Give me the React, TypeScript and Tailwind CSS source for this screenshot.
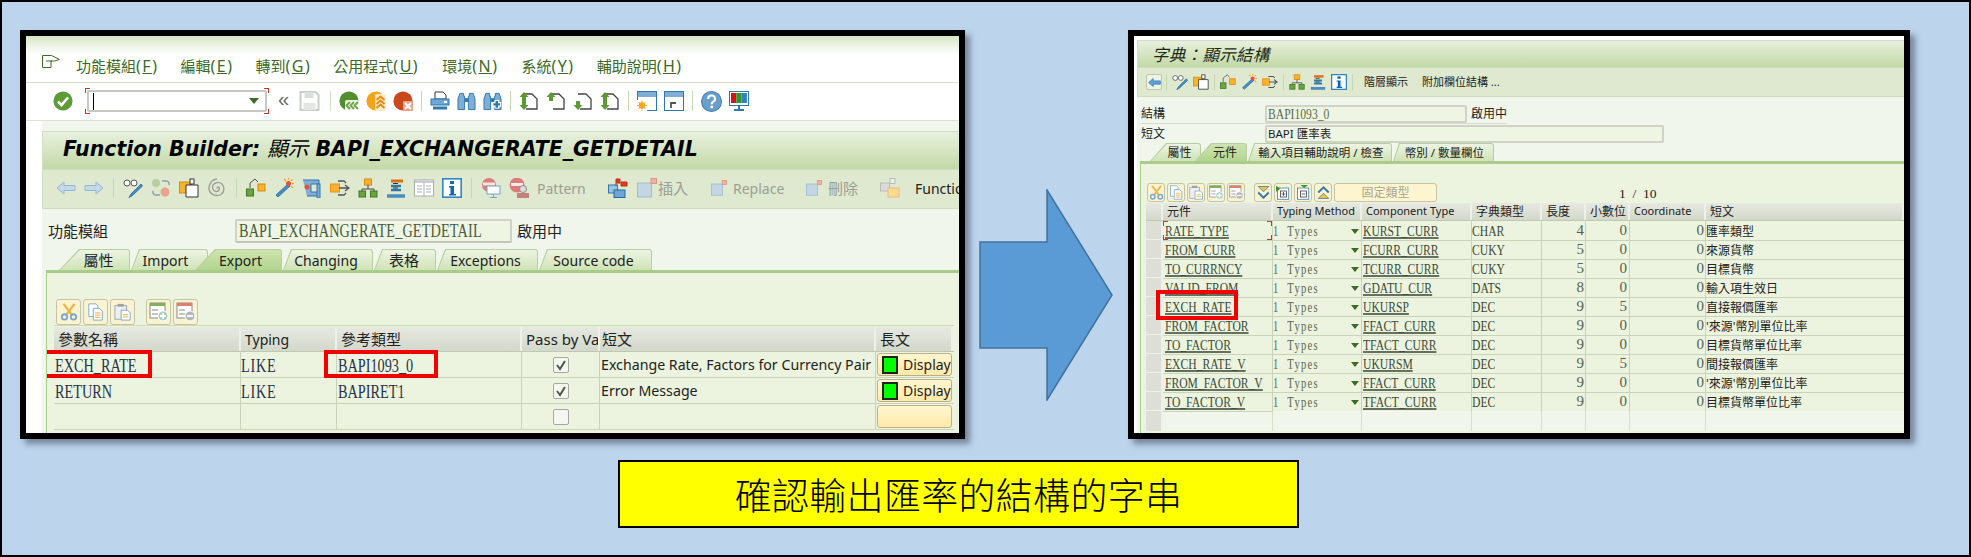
import React from "react";

type P = { className?: string };
const Svg = ({ className = "w-5 h-5", children }: P & { children: React.ReactNode }) => (
  <svg viewBox="0 0 20 20" className={`${className} shrink-0 block`}>{children}</svg>
);
const G = "#5c9a35", O = "#f5a623";

const Check = (p: P) => <Svg {...p}><circle cx="10" cy="10" r="9.6" fill="#5d9b38" /><path d="M5 10.5l3.5 3.5L15 6.5" fill="none" stroke="#fff" strokeWidth="2.6" /></Svg>;
const NavGreen = (p: P) => <Svg {...p}><circle cx="10" cy="10" r="9.6" fill="#4f8f2e" /><rect x="6" y="9" width="14" height="11" fill="#fff" opacity=".9" rx="2" /><path d="M11 11l-3.500 3.500 3.500 3.500M15 11l-3.500 3.500 3.500 3.500M19 11l-3.500 3.500 3.500 3.500" fill="none" stroke="#6aa53f" strokeWidth="1.800" /></Svg>;
const NavOrange = (p: P) => <Svg {...p}><circle cx="10" cy="10" r="9.600" fill="#f6a31c" /><rect x="9" y="3" width="11" height="17" fill="#fdebc8" rx="2" /><path d="M10.500 9l4-3.500 4 3.500M10.500 13l4-3.500 4 3.500M10.500 17l4-3.500 4 3.500" fill="none" stroke="#e98a10" strokeWidth="1.800" /></Svg>;
const NavRed = (p: P) => <Svg {...p}><circle cx="10" cy="10" r="9.600" fill="#c9481c" /><rect x="10" y="10" width="10" height="10" fill="#e9a186" rx="1" /><path d="M12 12l6 6M18 12l-6 6" stroke="#fff" strokeWidth="2.200" /></Svg>;
const Save = (p: P) => <Svg {...p}><path d="M1 1h15l3 3v15H1z" fill="#fff" stroke="#c9cdc8" strokeWidth="2" /><rect x="5" y="1" width="9" height="6" fill="#dcdedb" /><rect x="4" y="12" width="12" height="7" fill="#e4e6e2" /></Svg>;
const Print = (p: P) => <Svg {...p}><path d="M5 1h8l3 3v4H5z" fill="#fff" stroke="#333" /><rect x="1" y="8" width="18" height="6" fill="#6fa6d3" stroke="#2f78ad" /><rect x="14" y="10" width="3" height="2" fill="#fff" /><path d="M3 17h14" stroke="#2f78ad" strokeWidth="3" /></Svg>;
const Bino = ({ plus, ...p }: P & { plus?: boolean }) => <Svg {...p}><path d="M3 2h4v3h1v14H1V8z" fill="#7eaed6" stroke="#2f78ad" /><path d="M17 2h-4v3h-1v14h7V8z" fill="#7eaed6" stroke="#2f78ad" /><rect x="8" y="7" width="4" height="4" fill="#2f78ad" />{plus && <path d="M14.500 9v9M10 13.500h9" stroke="#fff" strokeWidth="5" />}{plus && <path d="M14.500 10v7M11 13.500h7" stroke="#2f78ad" strokeWidth="2.500" />}</Svg>;
const Pg = () => <path d="M5 3h8l5 5v10H7" fill="#fff" stroke="#444" strokeWidth="1.300" />;
const Up = ({ x, y }: { x: number; y: number }) => <path d={`M${x} ${y}l4.500 5h-2.500v4h-4v-4h-2.500z`} fill={G} />;
const Dn = ({ x, y }: { x: number; y: number }) => <path d={`M${x} ${y}l4.500-5h-2.500v-4h-4v4h-2.500z`} fill={G} />;
const PgFirst = (p: P) => <Svg {...p}><Pg /><Up x={5} y={1} /><Dn x={5} y={19} /></Svg>;
const PgUp = (p: P) => <Svg {...p}><Pg /><Up x={5} y={1} /></Svg>;
const PgDn = (p: P) => <Svg {...p}><Pg /><Dn x={5} y={19} /></Svg>;
const Win = ({ k, ...p }: P & { k: "star" | "arrow" }) => <Svg {...p}><rect x="0.500" y="0.500" width="19" height="19" fill="#fff" stroke="#2f78ad" /><rect x="1" y="1" width="18" height="5" fill="#7eaed6" />{k === "star" ? <g><rect x="0" y="9" width="10" height="11" fill="#fff" /><circle cx="5" cy="14.500" r="3.200" fill={O} /><path d="M5 9.500v10M0 14.500h10M1.500 11l7 7M8.500 11l-7 7" stroke={O} /></g> : <path d="M7 17v-5h5M8 12l4 0" fill="none" stroke="#555" strokeWidth="1.800" />}</Svg>;
const Help = (p: P) => <Svg {...p}><circle cx="10" cy="10" r="9.500" fill="#6b9fcb" stroke="#3f7fb5" /><path d="M6.800 7.500c0-4.200 6.600-4.200 6.600 0 0 2.700-3.200 2.500-3.200 5" fill="none" stroke="#fff" strokeWidth="2" /><rect x="9" y="14" width="2.400" height="2.400" fill="#fff" /></Svg>;
const Mon = (p: P) => <Svg {...p}><rect x="0.500" y="0.500" width="19" height="14" fill="#fff" stroke="#2f78ad" /><rect x="2" y="2" width="5.300" height="10" fill="#d6121a" /><rect x="7.300" y="2" width="5.300" height="10" fill="#2a9a2a" /><rect x="12.600" y="2" width="5.300" height="10" fill="#2f7fc9" /><path d="M10 15v3M5 19h10" stroke="#2f78ad" strokeWidth="2" /></Svg>;
const ArrowL = (p: P) => <Svg {...p}><path d="M1 10l7-6v3.500h11v5H8V16z" fill="#c3d9ea" stroke="#8fb8da" /></Svg>;
const ArrowR = (p: P) => <Svg {...p}><path d="M19 10l-7-6v3.500H1v5h11V16z" fill="#c3d9ea" stroke="#8fb8da" /></Svg>;
const Glasses = (p: P) => <Svg {...p}><circle cx="4" cy="5" r="3" fill="#fff" stroke="#555" /><circle cx="11" cy="5" r="3" fill="#fff" stroke="#555" /><path d="M18 6L8 16l-2 3.500 3.500-2L19.500 8z" fill="#4b8dc0" stroke="#2f78ad" /></Svg>;
const Circles = (p: P) => <Svg {...p}><circle cx="5" cy="5" r="4" fill="#b6cf9c" /><circle cx="14" cy="14" r="4.500" fill="#e9a48c" /><path d="M11 3h4a3 3 0 013 4M9 17H5a3 3 0 01-3-4" fill="none" stroke="#8fa0ac" strokeWidth="1.500" /></Svg>;
const CopyO = (p: P) => <Svg {...p}><rect x="0.500" y="4" width="12" height="11" fill="#f7b32b" stroke="#d98a10" /><path d="M7 7h12v12H7z" fill="#fff" stroke="#333" /><rect x="11" y="1" width="4" height="5" fill="#fff" stroke="#333" /></Svg>;
const Spiral = (p: P) => <Svg {...p}><path d="M10 10.500a1.500 1.500 0 012-1.500 3 3 0 01-3 4.500 4.500 4.500 0 01-3-6.500 6 6 0 019-1 7 7 0 01-1 10.500 8.500 8.500 0 01-11-2.500A9 9 0 0110 1" fill="none" stroke="#9b9f9a" strokeWidth="1.400" /></Svg>;
const Flow = (p: P) => <Svg {...p}><rect x="0.500" y="11" width="7" height="7" fill="#6aa53f" stroke="#3f7a22" /><rect x="12" y="6" width="7" height="7" fill="#f7b32b" stroke="#d98a10" /><path d="M4 10V5l5-4 3 3" fill="none" stroke="#555" /></Svg>;
const Wand = (p: P) => <Svg {...p}><path d="M14 6L2 17l2 2 12-11z" fill="#4b8dc0" stroke="#2f78ad" /><circle cx="14.500" cy="5.500" r="2.500" fill="#e8503a" /><path d="M14.500 0v2M20 5.500h-2M18.500 1.500l-1.500 1.500M19 10l-2-2M10 1l2 2" stroke={O} strokeWidth="1.300" /></Svg>;
const Clamp = (p: P) => <Svg {...p}><path d="M1 2h16v4h-8v8h8v4H5" fill="#7eaed6" stroke="#2f78ad" /><circle cx="5" cy="9" r="2.500" fill="#e8503a" /><rect x="15" y="6" width="3" height="14" fill="#7eaed6" stroke="#2f78ad" /></Svg>;
const Move = (p: P) => <Svg {...p}><rect x="0.500" y="6" width="9" height="8" fill="#f7b32b" stroke="#e8901a" /><path d="M9 10h9M15 7l4 3-4 3M8 3h6l2 2M8 17h6l2-2" fill="none" stroke="#555" strokeWidth="1.300" /></Svg>;
const Tree = (p: P) => <Svg {...p}><rect x="6.500" y="1" width="7" height="6" fill="#f7b32b" stroke="#d98a10" /><path d="M10 7v4M4 13v-2h12v2" fill="none" stroke="#444" /><rect x="1" y="13" width="6.500" height="6" fill="#6aa53f" stroke="#3f7a22" /><rect x="12.500" y="13" width="6.500" height="6" fill="#6aa53f" stroke="#3f7a22" /></Svg>;
const Stack = (p: P) => <Svg {...p}><path d="M5 3h12" stroke="#d9701a" strokeWidth="3" /><path d="M5 8h10M5 12h10" stroke="#2f78ad" strokeWidth="2.500" /><path d="M7 5.500h5M7 10h5" stroke="#333" /><path d="M1 18h18" stroke="#4b8dc0" strokeWidth="3.500" /></Svg>;
const Book = (p: P) => <Svg {...p}><rect x="0.500" y="2" width="19" height="16" fill="#fff" stroke="#a9adb0" /><rect x="1" y="2.500" width="18" height="2.500" fill="#c9cdd0" /><path d="M10 5v13M3 8h5M3 11h5M3 14h5M12 8h5M12 11h5M12 14h5" stroke="#a9adb0" /></Svg>;
const Info = (p: P) => <Svg {...p}><rect x="0.800" y="0.800" width="18.400" height="18.400" fill="#fff" stroke="#2f86c4" strokeWidth="1.600" /><rect x="8" y="3" width="4" height="3" fill="#0f6ab0" /><path d="M7 8h5v8h2v1.500H7V16h1.500V9.500H7z" fill="#0f6ab0" /></Svg>;
const StopMon = (p: P) => <Svg {...p}><circle cx="8" cy="7" r="7" fill="#dc7d79" /><path d="M2 6h12" stroke="#fff" strokeWidth="3" opacity=".8" /><rect x="6" y="8" width="13" height="8" fill="#fff" stroke="#6fa6d3" /><path d="M12.500 16v3M9 19.500h7" stroke="#6fa6d3" /></Svg>;
const StopP = (p: P) => <Svg {...p}><circle cx="8" cy="7" r="7.500" fill="#dc7d79" /><path d="M2 6.500h12" stroke="#fff" strokeWidth="3" opacity=".85" /><circle cx="14" cy="11" r="3.500" fill="#ddd" stroke="#8a8a8a" /><rect x="8" y="15" width="12" height="5" fill="#c9817c" /></Svg>;
const Flags = (p: P) => <Svg {...p}><rect x="0.500" y="7" width="9" height="8" fill="#9cc3e2" stroke="#2f78ad" /><rect x="6" y="12" width="11" height="7.500" fill="#6fa6d3" stroke="#1f6aa5" /><path d="M8 1v7M8 1h4v4H8M13 4h6v4h-6z" fill="#d9401e" stroke="#b5300f" /></Svg>;
const Ins = (p: P) => <Svg {...p}><rect x="0.500" y="5" width="14" height="14" fill="#c4d6e4" stroke="#9cbcd5" /><rect x="14" y="0.500" width="5.500" height="5" fill="#eeb3a3" stroke="#e09680" /></Svg>;
const Fn = (p: P) => <Svg {...p}><rect x="0.500" y="5" width="9" height="8" fill="#d9dcd8" stroke="#b9bcb8" /><rect x="10" y="0.500" width="5" height="5" fill="#eceeea" stroke="#b9bcb8" /><rect x="8" y="10" width="11" height="9" fill="#fadd8c" stroke="#f0b48a" /></Svg>;
const Scissors = (p: P) => <Svg {...p}><path d="M4 1l9 12M16 1L7 13" stroke="#f2b441" strokeWidth="2.500" /><circle cx="5" cy="15.500" r="3" fill="none" stroke="#7ba7cc" strokeWidth="2" /><circle cx="15" cy="15.500" r="3" fill="none" stroke="#7ba7cc" strokeWidth="2" /></Svg>;
const Copy2 = (p: P) => <Svg {...p}><path d="M2 1h8l2 2v12H2z" fill="#fff" stroke="#6fa6d3" /><path d="M7 6h7l3 3v10H7z" fill="#fff" stroke="#6fa6d3" /><path d="M9 11h6M9 13.500h6M9 16h6" stroke={O} /></Svg>;
const Paste = (p: P) => <Svg {...p}><rect x="1" y="3" width="13" height="15" fill="#eee" stroke="#9aa3aa" /><rect x="4" y="1" width="7" height="3" fill="#9aa3aa" /><path d="M8 8h7l3 3v8H8z" fill="#fff" stroke="#6fa6d3" /><path d="M10 13h6M10 15.500h6" stroke={O} /></Svg>;
const AddR = (p: P) => <Svg {...p}><rect x="1" y="1" width="15" height="15" fill="#fff" stroke="#888" /><rect x="1" y="1" width="15" height="3" fill="#7fb05c" /><path d="M3 8h6M3 12h6" stroke="#888" /><circle cx="14" cy="14" r="5" fill="#a9cfc1" stroke="#fff" /><path d="M14 11v6M11 14h6" stroke="#fff" strokeWidth="1.800" /></Svg>;
const DelR = (p: P) => <Svg {...p}><rect x="1" y="1" width="15" height="15" fill="#fff" stroke="#888" /><rect x="1" y="1" width="15" height="3" fill="#d9826c" /><path d="M3 8h6M3 12h6" stroke="#888" /><circle cx="14" cy="14" r="5" fill="#b5b8b8" stroke="#fff" /><path d="M11 14h6" stroke="#fff" strokeWidth="1.800" /></Svg>;
const TriDown = (p: P) => <Svg {...p}><path d="M3 2h14L10 9z" fill="#f7c33b" stroke="#2f78ad" /><path d="M3 10l7 7 7-7" fill="none" stroke="#2f78ad" strokeWidth="2.500" /></Svg>;
const TriUp = (p: P) => <Svg {...p}><path d="M3 18h14l-7-7z" fill="#f7c33b" stroke="#2f78ad" /><path d="M3 10l7-7 7 7" fill="none" stroke="#2f78ad" strokeWidth="2.500" /></Svg>;
const Exp = (p: P) => <Svg {...p}><rect x="2" y="4" width="15" height="15" fill="#fff" stroke="#2f78ad" /><path d="M0 1l6 4-6 4z" fill="#3f8f2a" /><rect x="6" y="8" width="8" height="8" fill="none" stroke="#333" /><path d="M10 9.500v5M7.500 12h5" stroke="#333" /></Svg>;
const Col = (p: P) => <Svg {...p}><rect x="2" y="4" width="15" height="15" fill="#fff" stroke="#2f78ad" /><path d="M6 0l5 4 5-4z" fill="#3f8f2a" /><rect x="6" y="8" width="8" height="8" fill="none" stroke="#333" /><path d="M7.500 12h5" stroke="#333" /></Svg>;
const BackBlue = (p: P) => <Svg {...p}><path d="M1 10l7-6v3.500h11v5H8V16z" fill="#5fa5dc" stroke="#1f6aa5" /></Svg>;

const Sep = () => <div className="w-px h-5 mx-px bg-[#c5d8b0] shrink-0" />;
const SepS = () => <div className="w-px h-4 bg-[#c5d8b0] shrink-0" />;

const Ser = ({ className = "", children }: P & { children: React.ReactNode }) => (
  <span className={`inline-block origin-left scale-x-[0.75] whitespace-nowrap font-['Liberation_Serif','Noto_Sans_CJK_TC',serif] ${className}`}>{children}</span>
);

const Menu = ({ t, k, className = "" }: P & { t: string; k: string }) => (
  <span className={`text-[15px] leading-none text-[#3c6a27] whitespace-nowrap ${className}`}>{t}<span className="text-[16px] tracking-[1.500px]">(<span className="underline">{k}</span>)</span></span>
);

const Tab = ({ w, clip, active, z, className = "", text, size = "text-[14px]", inner = "" }: { w: string; clip: string; active?: boolean; z?: string; className?: string; text: string; size?: string; inner?: string }) => (
  <div className={`relative h-full p-px pb-0 rounded-tr-[3px] bg-[#b7cfa0] ${clip} ${w} ${z ?? ""} ${className}`}>
    <div className={`h-full rounded-tr-[2px] flex items-center justify-center whitespace-nowrap ${size} text-[#222] ${clip} ${inner} ${active ? "bg-gradient-to-b from-[#cde4ae] to-[#b3d48f]" : "bg-gradient-to-b from-[#edf4e2] to-[#cfe3b6]"}`}>
      {text}
    </div>
  </div>
);

const TblBtn = ({ children, className = "w-[25px] h-[26px]" }: P & { children: React.ReactNode }) => (
  <div className={`${className} shrink-0 rounded-[3px] border border-[#c7c3a4] bg-[#faf3d2] flex items-center justify-center`}>{children}</div>
);

const Head = ({ children, className = "" }: P & { children?: React.ReactNode }) => (
  <div className={`flex items-center pl-1 whitespace-nowrap overflow-hidden border-r-2 border-[#eef0ea] bg-gradient-to-b from-[#e7e9e1] to-[#d2d8ca] ${className}`}>{children}</div>
);

const Display = ({ on = true }: { on?: boolean }) => (
  <div className="h-[23px] mx-px my-auto rounded-[3px] border border-[#b9b08a] bg-gradient-to-b from-[#fff6d0] to-[#ffe9a9] flex items-center">
    {on && <div className="ml-1 w-4 h-[18px] bg-[#00ff00] border-2 border-[#222] shrink-0" />}
    {on && <span className="ml-[5px] text-[14px] text-[#222]">Display</span>}
  </div>
);

const Box = ({ on }: { on?: boolean }) => (
  <div className="w-4 h-4 mx-auto rounded-[2px] border border-[#a6a8a2] bg-[#f4f6f0] flex items-center justify-center">
    {on && <svg viewBox="0 0 12 12" className="w-3 h-3"><path d="M2 6l3 4 5-8" fill="none" stroke="#4a5a44" strokeWidth="2" /></svg>}
  </div>
);

const RedCorners = () => (
  <>
    <span className="absolute left-0 top-0 w-[5px] h-[5px] border-l border-t border-[#c0392b]" />
    <span className="absolute right-0 top-0 w-[5px] h-[5px] border-r border-t border-[#c0392b]" />
    <span className="absolute left-0 bottom-0 w-[5px] h-[5px] border-l border-b border-[#c0392b]" />
    <span className="absolute right-0 bottom-0 w-[5px] h-[5px] border-r border-b border-[#c0392b]" />
  </>
);

const LeftRow = ({ a, b, c, txt, on }: { a?: string; b?: string; c?: string; txt?: string; on?: boolean }) => (
  <div className="grid grid-cols-[187px_96px_185px_78px_276px_77px] h-[26px] shrink-0 border-b border-[#c8d3b9] text-[#222]">
    <div className="flex items-center pl-px pt-[3px] border-r border-[#c8d3b9] overflow-hidden"><Ser className="text-[19px] text-[#26334a]">{a}</Ser></div>
    <div className="flex items-center pt-[3px] border-r border-[#c8d3b9] overflow-hidden"><Ser className="text-[19px] text-[#26334a] tracking-[1px]">{b}</Ser></div>
    <div className="flex items-center pl-px pt-[3px] border-r border-[#c8d3b9] overflow-hidden"><Ser className="text-[19px] text-[#26334a]">{c}</Ser></div>
    <div className="flex items-center border-r border-[#c8d3b9]"><Box on={on} /></div>
    <div className="flex items-center pl-px border-r border-[#c8d3b9] text-[14.200px] whitespace-nowrap overflow-hidden">{txt}</div>
    <div className="flex items-center"><div className="w-full"><Display on={!!txt} /></div></div>
  </div>
);

const LeftWindow = () => (
  <div className="w-[945px] h-[409px] shrink-0 border-[6px] border-black shadow-[5px_5px_6px_rgba(60,70,85,0.55)] bg-white flex flex-col overflow-hidden">
    <div className="h-[47px] shrink-0 border-b border-[#d5dccb] bg-gradient-to-b from-[#d8e6c6] via-white via-40% to-white flex items-end pb-[8px] pl-4">
      <svg viewBox="0 0 18 13" className="w-[18px] h-[13px] mb-[6px] shrink-0"><path d="M0.500 0.500h9l8 4-5 1.500-3.500 0v6.500h-8.500zM4 6h6" fill="none" stroke="#3c6a27" /></svg>
      <Menu t="功能模組" k="F" className="ml-4" />
      <Menu t="編輯" k="E" className="ml-[22px]" />
      <Menu t="轉到" k="G" className="ml-[22px]" />
      <Menu t="公用程式" k="U" className="ml-[22px]" />
      <Menu t="環境" k="N" className="ml-[23px]" />
      <Menu t="系統" k="Y" className="ml-[23px]" />
      <Menu t="輔助說明" k="H" className="ml-[22px]" />
    </div>
    <div className="h-[38px] shrink-0 border-b border-[#dde2d6] flex items-center pl-[27px] pb-px gap-[7px]">
      <Check />
      <div className="relative ml-[5px] w-[184px] h-[26px] shrink-0 p-[2px] flex items-center">
        <RedCorners />
        <div className="w-full h-full border-2 border-[#c6c8c4] rounded-[2px] bg-white flex items-center pl-1 pr-[6px] justify-between">
          <div className="w-px h-[17px] bg-black" />
          <svg viewBox="0 0 10 6" className="w-[10px] h-[6px]"><path d="M0 0h10L5 6z" fill="#3c6a27" /></svg>
        </div>
      </div>
      <span className="ml-[2px] w-[14px] text-[20px] leading-none text-[#666] font-['Liberation_Sans'] -mt-1">«</span>
      <Save className="w-[21px] h-5" />
      <div className="w-px h-5 ml-[3px] mr-px bg-[#cfe0bb] shrink-0" />
      <NavGreen /><NavOrange /><NavRed /><Sep />
      <Print /><Bino className="w-[19px] h-5" /><Bino plus className="w-[19px] h-5" /><Sep />
      <PgFirst /><PgUp /><PgDn /><PgFirst /><Sep />
      <Win k="star" /><Win k="arrow" /><Sep />
      <Help className="w-[21px] h-[21px]" /><Mon />
    </div>
    <div className="flex-1 min-h-0 pl-4 flex">
      <div className="flex-1 min-w-0 bg-[#f1f6ec] flex flex-col pt-[10px] overflow-hidden">
        <div className="h-[38px] shrink-0 border-t border-l border-[#d3dfc4] bg-gradient-to-b from-[#e8f0de] to-[#c3d9a6] flex items-center pl-[20px] pb-[3px]">
          <span className="font-['DejaVu_Sans','Noto_Sans_CJK_TC',sans-serif] text-[20.500px] font-bold italic text-black whitespace-nowrap">Function Builder: <span className="font-normal">顯示</span> BAPI_EXCHANGERATE_GETDETAIL</span>
        </div>
        <div className="h-[40px] shrink-0 border-y border-[#d0dcc0] border-l bg-[#dfe9d0] flex items-center pl-[13px] pb-[2px] gap-2 text-[14px] whitespace-nowrap">
          <ArrowL /><ArrowR /><Sep />
          <Glasses /><Circles /><CopyO /><Spiral /><Sep />
          <Flow /><Wand /><Clamp /><Move /><Tree /><Stack /><Book /><Info /><Sep />
          <StopMon /><StopP />
          <span className="w-[48px] text-[#9aa094]">Pattern</span>
          <div className="ml-[7px] w-px h-5 bg-[#c5d8b0]" />
          <Flags />
          <Ins className="w-5 h-5 ml-px" />
          <span className="-ml-[7px] w-[30px] text-[15px] text-[#9aa094]">插入</span>
          <Ins className="w-[16px] h-5 ml-[15px]" />
          <span className="-ml-[2px] w-[50px] text-[#9aa094]">Replace</span>
          <Ins className="w-[16px] h-5 ml-[15px]" />
          <span className="-ml-[2px] w-[30px] text-[15px] text-[#9aa094]">刪除</span>
          <Fn className="w-5 h-5 ml-[14px]" />
          <span className="ml-[7px] text-[#222]">Function</span>
        </div>
        <div className="h-[40px] shrink-0 pl-[6px] flex items-start pt-[10px]">
          <span className="w-[187px] text-[15px] text-[#222] leading-[24px]">功能模組</span>
          <div className="w-[277px] h-[24px] border-2 border-[#cfd2c8] border-b-[#c2c6ba] rounded-[2px] bg-[#eef5e2] pl-[2px] leading-[20px] overflow-hidden shrink-0">
            <Ser className="text-[19px] text-[#4a5a40] tracking-[0.200px]">BAPI_EXCHANGERATE_GETDETAIL</Ser>
          </div>
          <span className="ml-[5px] text-[15px] text-[#222] leading-[24px]">啟用中</span>
        </div>
        <div className="h-[21px] shrink-0 flex ml-[17px]">
          <Tab text="屬性" size="text-[15px]" inner="pl-2" w="w-[71px]" clip="[clip-path:polygon(20px_0,100%_0,100%_100%,0_100%)]" />
          <Tab text="Import" w="w-[77px]" className="ml-[1px]" inner="pr-[8px]" clip="[clip-path:polygon(8px_0,100%_0,100%_100%,0_100%)]" />
          <Tab text="Export" w="w-[87px]" active className="-ml-[13px]" inner="pl-[4px]" z="z-10" clip="[clip-path:polygon(20px_0,100%_0,100%_100%,0_100%)]" />
          <Tab text="Changing" w="w-[90px]" className="ml-px" inner="pr-[4px]" clip="[clip-path:polygon(8px_0,100%_0,100%_100%,0_100%)]" />
          <Tab text="表格" size="text-[15px]" w="w-[62px]" className="ml-px" inner="pr-[2px]" clip="[clip-path:polygon(8px_0,100%_0,100%_100%,0_100%)]" />
          <Tab text="Exceptions" w="w-[101px]" className="ml-px" inner="pr-[4px]" clip="[clip-path:polygon(8px_0,100%_0,100%_100%,0_100%)]" />
          <Tab text="Source code" w="w-[113px]" className="ml-px" inner="pr-[4px]" clip="[clip-path:polygon(8px_0,100%_0,100%_100%,0_100%)]" />
        </div>
        <div className="flex-1 min-h-0 ml-1 border-t-[3px] border-l border-[#a9cc8a] bg-[#ecf4df] flex flex-col pl-[7px] pt-[26px] overflow-hidden">
          <div className="flex gap-[2px] pl-[2px] h-[26px] shrink-0">
            <TblBtn><Scissors className="w-[18px] h-5" /></TblBtn>
            <TblBtn><Copy2 className="w-[18px] h-5" /></TblBtn>
            <TblBtn><Paste className="w-[18px] h-5" /></TblBtn>
            <TblBtn className="w-[25px] h-[26px] ml-[9px]"><AddR className="w-[20px] h-5" /></TblBtn>
            <TblBtn><DelR className="w-[20px] h-5" /></TblBtn>
          </div>
          <div className="border-t border-[#c8dbb0] pt-[1px] w-[900px] flex flex-col relative">
            <div className="grid grid-cols-[187px_96px_185px_78px_276px_77px] h-[25px] shrink-0 text-[15px] text-[#222] border-b border-[#bfc8b2]">
              <Head>參數名稱</Head><Head className="text-[14px]">Typing</Head><Head>參考類型</Head><Head>Pass by Va</Head><Head className="!pl-[2px]">短文</Head><Head className="border-r-0">長文</Head>
            </div>
            <LeftRow a="EXCH_RATE" b="LIKE" c="BAPI1093_0" txt="Exchange Rate, Factors for Currency Pair" on />
            <LeftRow a="RETURN" b="LIKE" c="BAPIRET1" txt="Error Message" on />
            <LeftRow />
            <span className="absolute left-[-13px] top-[24px] w-[111px] h-[28px] border-[4px] border-[#f00000]" />
            <span className="absolute left-[270px] top-[24px] w-[114px] h-[28px] border-[4px] border-[#f00000]" />
          </div>
        </div>
      </div>
    </div>
  </div>
);

const rows = [
  ["RATE_TYPE", "KURST_CURR", "CHAR", "4", "0", "匯率類型"],
  ["FROM_CURR", "FCURR_CURR", "CUKY", "5", "0", "來源貨幣"],
  ["TO_CURRNCY", "TCURR_CURR", "CUKY", "5", "0", "目標貨幣"],
  ["VALID_FROM", "GDATU_CUR", "DATS", "8", "0", "輸入項生效日"],
  ["EXCH_RATE", "UKURSP", "DEC", "9", "5", "直接報價匯率"],
  ["FROM_FACTOR", "FFACT_CURR", "DEC", "9", "0", "'來源'幣別單位比率"],
  ["TO_FACTOR", "TFACT_CURR", "DEC", "9", "0", "目標貨幣單位比率"],
  ["EXCH_RATE_V", "UKURSM", "DEC", "9", "5", "間接報價匯率"],
  ["FROM_FACTOR_V", "FFACT_CURR", "DEC", "9", "0", "'來源'幣別單位比率"],
  ["TO_FACTOR_V", "TFACT_CURR", "DEC", "9", "0", "目標貨幣單位比率"],
];

const Link = ({ children }: { children: React.ReactNode }) => (
  <Ser className="text-[15.500px] leading-[18px] text-[#3a4a38] underline decoration-[#66705f] decoration-2 underline-offset-[1px]">{children}</Ser>
);

const cellB = "border-r border-b border-[#c8d3b9] overflow-hidden flex items-center";
const RightWindow = () => (
  <div className="w-[782px] h-[409px] shrink-0 border-[6px] border-black shadow-[5px_5px_6px_rgba(60,70,85,0.55)] bg-white flex flex-col pt-1 pl-[3px] overflow-hidden">
    <div className="h-[27px] shrink-0 border-t border-l border-[#d3dfc4] bg-gradient-to-b from-[#e8f0de] to-[#c3d9a6] flex items-center pl-[14px]">
      <span className="font-['Noto_Sans_CJK_TC',sans-serif] text-[16.500px] italic tracking-[0.300px] text-[#1d2a16] whitespace-nowrap">字典：顯示結構</span>
    </div>
    <div className="h-[30px] shrink-0 border-y border-l border-[#d0dcc0] bg-[#dfe9d0] flex items-center pl-2 gap-[5px] text-[11px] text-[#222] whitespace-nowrap">
      <div className="w-4 h-4 -mr-[1px] shrink-0 rounded-[2px] border border-[#bcc7ae] bg-[#eef3e5] flex items-center justify-center"><BackBlue className="w-[13px] h-[13px]" /></div>
      <SepS />
      <Glasses className="w-4 h-4" /><CopyO className="w-4 h-4" /><SepS />
      <Flow className="w-4 h-4" /><Wand className="w-4 h-4" /><Move className="w-4 h-4" /><SepS />
      <Tree className="w-4 h-4" /><Stack className="w-4 h-4" /><Info className="w-4 h-4" /><SepS />
      <span className="ml-[6px]">階層顯示</span>
      <span className="ml-[9px]">附加欄位結構 ...</span>
    </div>
    <div className="bg-[#f1f6ec] flex-1 min-h-0 flex flex-col overflow-hidden">
      <div className="h-[46px] shrink-0 pl-1 pt-2 flex flex-col text-[12px] text-[#222]">
        <div className="h-[19px] flex items-center border-b border-[#d5dccb] w-[1px] min-w-max">
          <span className="w-[124px]">結構</span>
          <div className="w-[202px] h-[18px] border-2 border-[#cfd2c8] rounded-[2px] bg-[#eef5e2] pl-[1px] leading-[14px] overflow-hidden"><Ser className="text-[15.500px] text-[#5b6a50]">BAPI1093_0</Ser></div>
          <span className="ml-1">啟用中</span>
        </div>
        <div className="h-[19px] flex items-center">
          <span className="w-[124px]">短文</span>
          <div className="w-[399px] h-[18px] border-2 border-[#cfd2c8] rounded-[2px] bg-[#eef5e2] pl-[1px] flex items-center text-[11.500px]">BAPI 匯率表</div>
        </div>
      </div>
      <div className="h-[18px] shrink-0 flex ml-[13px]">
        <Tab text="屬性" size="text-[12px]" inner="pl-2" w="w-[51px]" clip="[clip-path:polygon(16px_0,100%_0,100%_100%,0_100%)]" />
        <Tab text="元件" size="text-[12px]" inner="pl-2" active w="w-[52px]" className="-ml-[6px]" z="z-10" clip="[clip-path:polygon(16px_0,100%_0,100%_100%,0_100%)]" />
        <Tab text="輸入項目輔助說明 / 檢查" size="text-[11.500px]" inner="pl-[2px]" w="w-[144px]" className="ml-px" clip="[clip-path:polygon(6px_0,100%_0,100%_100%,0_100%)]" />
        <Tab text="幣別 / 數量欄位" size="text-[11.500px]" inner="pl-[2px]" w="w-[101px]" className="ml-px" clip="[clip-path:polygon(6px_0,100%_0,100%_100%,0_100%)]" />
      </div>
      <div className="flex-1 min-h-0 ml-[3px] border-t-[3px] border-l border-[#a9cc8a] bg-[#ecf4df] flex flex-col pl-[5px] pt-[19px] overflow-hidden">
        <div className="flex h-[20px] shrink-0 pl-[1px] gap-[2px] items-start">
          <TblBtn className="w-[18px] h-[19px]"><Scissors className="w-[15px] h-[15px]" /></TblBtn>
          <TblBtn className="w-[18px] h-[19px]"><Copy2 className="w-[15px] h-[15px]" /></TblBtn>
          <TblBtn className="w-[18px] h-[19px]"><Paste className="w-[15px] h-[15px]" /></TblBtn>
          <TblBtn className="w-[18px] h-[19px]"><AddR className="w-[15px] h-[15px]" /></TblBtn>
          <TblBtn className="w-[18px] h-[19px]"><DelR className="w-[15px] h-[15px]" /></TblBtn>
          <TblBtn className="w-[18px] h-[19px] ml-[7px]"><TriDown className="w-[15px] h-[15px]" /></TblBtn>
          <TblBtn className="w-[18px] h-[19px]"><Exp className="w-[15px] h-[15px]" /></TblBtn>
          <TblBtn className="w-[18px] h-[19px]"><Col className="w-[15px] h-[15px]" /></TblBtn>
          <TblBtn className="w-[18px] h-[19px]"><TriUp className="w-[15px] h-[15px]" /></TblBtn>
          <div className="w-[103px] h-[19px] rounded-[3px] border border-[#c7c3a4] bg-[#fdf5cf] text-[12px] text-[#a8a690] flex items-center justify-center">固定類型</div>
          <span className="ml-[180px] mt-[1px] font-['Liberation_Serif'] text-[13.500px] text-[#222] whitespace-pre">1  /  10</span>
        </div>
        <div className="w-[758px] flex flex-col relative">
          <div className="grid grid-cols-[17px_110px_89px_110px_70px_44px_44px_76px_198px] h-[18px] shrink-0 text-[12px] text-[#222] border-b border-[#bfc8b2]">
            <Head className="!pl-0"></Head><Head>元件</Head><Head className="text-[11px]">Typing Method</Head><Head className="text-[11px]">Component Type</Head><Head>字典類型</Head><Head>長度</Head><Head>小數位</Head><Head className="text-[11px]">Coordinate</Head><Head className="border-r-0">短文</Head>
          </div>
          {rows.map((r, i) => (
            <div key={i} className="grid grid-cols-[17px_110px_89px_110px_70px_44px_44px_76px_198px] h-[19px] shrink-0 text-[#3a4a38]">
              <div className="bg-[#dddfd6] border-r-2 border-b-2 border-[#eef0ea]" />
              <div className={`${cellB} pl-[2px] pt-px relative overflow-visible`}><Link>{r[0]}</Link>{i === 0 && <RedCorners />}</div>
              <div className={`${cellB} justify-between pr-[2px] pt-px`}><Ser className="text-[14px] text-[#5a6657] tracking-[1.800px] whitespace-pre">1  Types</Ser><svg viewBox="0 0 8 5" className="w-2 h-[5px] shrink-0"><path d="M0 0h8L4 5z" fill="#3c6a27" /></svg></div>
              <div className={`${cellB} pl-[1px] pt-px`}><Link>{r[1]}</Link></div>
              <div className={`${cellB} pt-px`}><Ser className="text-[15.500px] text-[#3a4a38]">{r[2]}</Ser></div>
              <div className={`${cellB} justify-end pr-[1px] font-['Liberation_Serif'] text-[15px] text-[#555f50]`}>{r[3]}</div>
              <div className={`${cellB} justify-end pr-[2px] font-['Liberation_Serif'] text-[15px] text-[#555f50]`}>{r[4]}</div>
              <div className={`${cellB} justify-end pr-[1px] font-['Liberation_Serif'] text-[15px] text-[#555f50]`}>0</div>
              <div className="border-b border-[#c8d3b9] text-[12px] leading-none flex items-center pt-[2px] whitespace-nowrap text-[#222]">{r[5]}</div>
            </div>
          ))}
          <div className="grid grid-cols-[17px_110px_89px_110px_70px_44px_44px_76px_198px] h-[20px] shrink-0 bg-[#f1f6ec]">
            <div className="bg-[#dddfd6] border-r-2 border-[#eef0ea]" />
            <div className="border-r border-[#d6dfc9]" /><div className="border-r border-[#d6dfc9]" /><div className="border-r border-[#d6dfc9]" /><div className="border-r border-[#d6dfc9]" /><div className="border-r border-[#d6dfc9]" /><div className="border-r border-[#d6dfc9]" /><div className="border-r border-[#d6dfc9]" /><div />
          </div>
          <span className="absolute left-[10px] top-[87px] w-[82px] h-[30px] border-[4px] border-[#f00000]" />
        </div>
      </div>
    </div>
  </div>
);

export default function App() {
  return (
    <div className="w-[1971px] h-[557px] border-2 border-black bg-[#bcd5ed] overflow-hidden font-['Noto_Sans','Noto_Sans_CJK_TC',sans-serif] pt-[28px]">
      <div className="flex items-start pl-[18px]">
        <LeftWindow />
        <svg viewBox="0 0 134 212" className="w-[134px] h-[212px] ml-[14px] mt-[159px] shrink-0">
          <path d="M1 53h67V1l65 105-65 105v-52H1z" fill="#5b9bd5" stroke="#41719c" strokeWidth="1.500" />
        </svg>
        <div className="ml-[15px]"><RightWindow /></div>
      </div>
      <div className="ml-[616px] mt-[21px] w-[681px] h-[68px] border-2 border-black bg-[#ffff00] flex items-center justify-center text-[37px] tracking-[0.300px] text-black font-['Noto_Sans_CJK_TC',sans-serif] font-light leading-none">
        確認輸出匯率的結構的字串
      </div>
    </div>
  );
}
